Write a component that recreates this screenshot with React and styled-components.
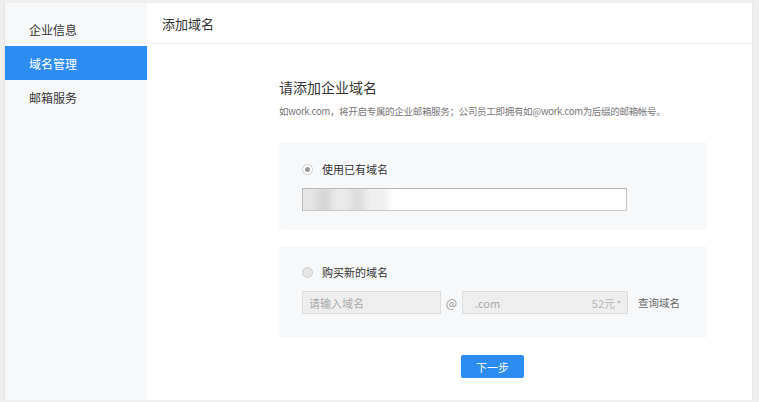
import React from "react";
import styled, { createGlobalStyle } from "styled-components";

const Global = createGlobalStyle`
  html, body { margin: 0; padding: 0; background: #efefef; }
  body { font-family: "Noto Sans CJK SC", "Noto Sans", "Liberation Sans", sans-serif; }
  * { box-sizing: border-box; }
`;

const Frame = styled.div`
  display: flex;
  height: 397px;
  margin: 3px 6px 2px 4px;
  border-left: 1px solid #e3e3e3;
  background: #fff;
`;

const Sidebar = styled.nav`
  width: 142px;
  flex-shrink: 0;
  background: #f7f8fa;
  padding-top: 9px;
  display: flex;
  flex-direction: column;
`;

const NavItem = styled.div`
  height: 34px;
  display: flex;
  align-items: center;
  padding-left: 24px;
  font-size: 12px;
  color: ${(p) => (p.$active ? "#fff" : "#333")};
  background: ${(p) => (p.$active ? "#2d8cf0" : "transparent")};
`;

const Main = styled.main`
  flex: 1;
  display: flex;
  flex-direction: column;
  background: #fff;
  border-right: 1px solid #e8e8e8;
`;

const Header = styled.div`
  height: 41px;
  border-bottom: 1px solid #eeeeee;
  display: flex;
  align-items: center;
  padding-left: 15px;
  font-size: 13px;
  color: #333;
`;

const Content = styled.div`
  width: 428px;
  margin-left: 132px;
  padding-top: 33px;
  display: flex;
  flex-direction: column;
`;

const Title = styled.h2`
  margin: 0;
  font-size: 14px;
  font-weight: normal;
  line-height: 20px;
  color: #333;
`;

const Desc = styled.p`
  margin: 7px 0 0 0;
  font-size: 9.5px;
  letter-spacing: -0.3px;
  line-height: 14px;
  color: #777;
  white-space: nowrap;
`;

const Card = styled.section`
  background: #f7f8fa;
  border-radius: 4px;
  padding: ${(p) => p.$pad};
  margin-top: ${(p) => p.$mt};
  display: flex;
  flex-direction: column;
  gap: 10px;
`;

const RadioRow = styled.label`
  display: flex;
  align-items: center;
  gap: 9px;
  height: 18px;
  font-size: 11px;
  color: #333;
`;

const Radio = styled.span`
  width: 11px;
  height: 11px;
  border-radius: 50%;
  border: 1px solid #d0d0d0;
  background: ${(p) => (p.$checked ? "#fff" : "#e6e6e6")};
  display: flex;
  align-items: center;
  justify-content: center;
  &::after {
    content: "";
    width: 5px;
    height: 5px;
    border-radius: 50%;
    background: ${(p) => (p.$checked ? "#999" : "transparent")};
  }
`;

const TextInput = styled.div`
  position: relative;
  width: 325px;
  height: 23px;
  background: #fff;
  border: 1px solid #c9c9c9;
  border-top-color: #b9b9b9;
  border-left-color: #b9b9b9;
  overflow: hidden;
`;

const Blur = styled.div`
  position: absolute;
  left: -4px;
  top: -3px;
  width: 90px;
  height: 30px;
  display: flex;
  filter: blur(3px);
  span { height: 100%; }
`;

const FieldRow = styled.div`
  display: flex;
  align-items: center;
  font-size: 11px;
  color: #999;
`;

const GrayBox = styled.div`
  width: ${(p) => p.$w}px;
  height: 23px;
  background: #eeeeee;
  border: 1px solid #dddddd;
  display: flex;
  align-items: center;
  justify-content: space-between;
  padding: 0 6px 0 ${(p) => p.$pl}px;
  color: #aaa;
  font-size: 11px;
`;

const At = styled.span`
  width: 21px;
  text-align: center;
  color: #999;
  font-size: 12px;
`;

const Price = styled.span`
  display: flex;
  align-items: center;
  gap: 2px;
  color: #b5b5b5;
  &::after {
    content: "";
    border-left: 2px solid transparent;
    border-right: 2px solid transparent;
    border-top: 3px solid #c0c0c0;
  }
`;

const Link = styled.span`
  margin-left: 10px;
  color: #666;
  font-size: 10.5px;
`;

const Actions = styled.div`
  display: flex;
  justify-content: flex-start;
  padding-left: 182px;
  margin-top: 17px;
`;

const Button = styled.button`
  width: 63px;
  height: 23px;
  border: none;
  border-radius: 2px;
  background: #2d8cf0;
  color: #fff;
  font-family: inherit;
  font-size: 11px;
  padding: 0;
`;

export default function App() {
  return (
    <>
      <Global />
      <Frame>
        <Sidebar>
          <NavItem>企业信息</NavItem>
          <NavItem $active>域名管理</NavItem>
          <NavItem>邮箱服务</NavItem>
        </Sidebar>
        <Main>
          <Header>添加域名</Header>
          <Content>
            <Title>请添加企业域名</Title>
            <Desc>
              如work.com，将开启专属的企业邮箱服务；公司员工即拥有如@work.com为后缀的邮箱帐号。
            </Desc>
            <Card $mt="24px" $pad="18px 23px 19px">
              <RadioRow>
                <Radio $checked />
                使用已有域名
              </RadioRow>
              <TextInput>
                <Blur>
                  <span style={{ width: 18, background: "#e4e4e4" }} />
                  <span style={{ width: 14, background: "#d6d6d6" }} />
                  <span style={{ width: 20, background: "#e9e9e9" }} />
                  <span style={{ width: 14, background: "#dcdcdc" }} />
                  <span style={{ width: 24, background: "#f0f0f0" }} />
                </Blur>
              </TextInput>
            </Card>
            <Card $mt="16px" $pad="17px 23px 24px">
              <RadioRow>
                <Radio />
                购买新的域名
              </RadioRow>
              <FieldRow>
                <GrayBox $w={139} $pl={6}>请输入域名</GrayBox>
                <At>@</At>
                <GrayBox $w={166} $pl={12}>
                  <span>.com</span>
                  <Price>52元</Price>
                </GrayBox>
                <Link>查询域名</Link>
              </FieldRow>
            </Card>
            <Actions>
              <Button>下一步</Button>
            </Actions>
          </Content>
        </Main>
      </Frame>
    </>
  );
}
